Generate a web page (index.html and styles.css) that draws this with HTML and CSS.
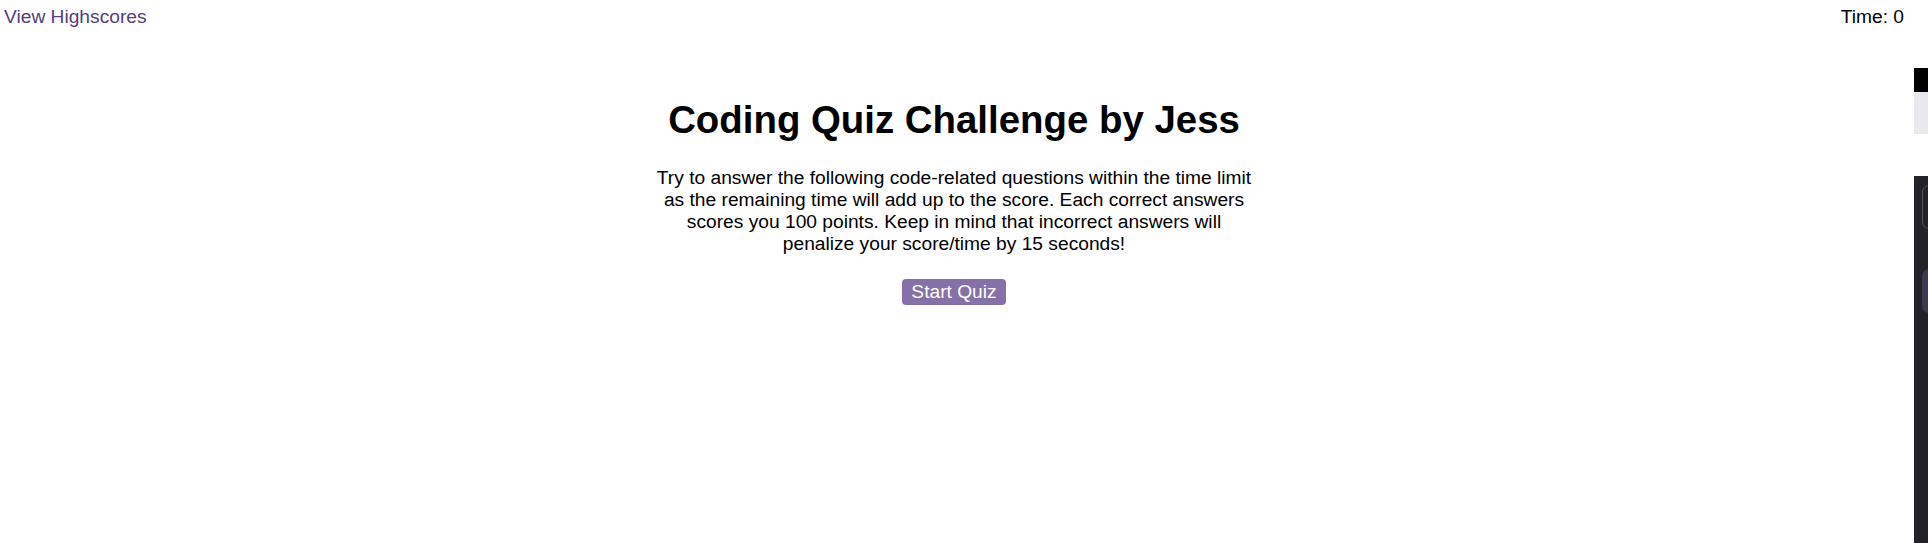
FILE: index.html
```html
<!DOCTYPE html>
<html lang="en">
<head>
<meta charset="utf-8">
<title>Coding Quiz Challenge</title>
<link rel="stylesheet" href="styles.css">
</head>
<body>
<div class="page">
  <header class="topbar">
    <a class="highscores" href="#">View Highscores</a>
    <span class="timer">Time: 0</span>
  </header>
  <section class="intro">
    <h1 class="title">Coding Quiz Challenge by Jess</h1>
    <p class="desc">Try to answer the following code-related questions within the time limit as the remaining time will add up to the score. Each correct answers scores you 100 points. Keep in mind that incorrect answers will penalize your score/time by 15 seconds!</p>
    <button class="start" type="button">Start Quiz</button>
  </section>
</div>
<aside class="side">
  <div class="side-black"></div>
  <div class="side-gray"></div>
  <div class="side-dark">
    <div class="side-outline"></div>
    <div class="side-fill"></div>
  </div>
</aside>
</body>
</html>
```

FILE: styles.css
```css
html, body {
  margin: 0;
  padding: 0;
  height: 100%;
  background: #ffffff;
}

body {
  display: flex;
  font-family: "Liberation Sans", Arial, sans-serif;
  font-size: 19.2px;
  color: #000000;
  overflow: hidden;
}

.page {
  flex: 0 0 1908px;
}

.topbar {
  display: flex;
  justify-content: space-between;
  padding: 6px 4px 0 4px;
  line-height: 22px;
}

.highscores {
  color: #563d7c;
  text-decoration: none;
}

.timer {
  color: #000000;
}

.intro {
  width: 600px;
  margin: 0 auto;
  padding-top: 44px;
  text-align: center;
}

.title {
  font-size: 38.4px;
  font-weight: bold;
  margin: 25.7px 0;
  line-height: 44px;
}

.desc {
  margin: 25.7px 0 24px;
  line-height: 22px;
}

.start {
  font-family: "Liberation Sans", Arial, sans-serif;
  font-size: 19.2px;
  color: #ffffff;
  background: #8670a8;
  border: none;
  border-radius: 4px;
  padding: 2px 9px;
  line-height: 22px;
  cursor: pointer;
}

.side {
  flex: 0 0 14px;
  margin-left: 6px;
  display: flex;
  flex-direction: column;
  overflow: hidden;
  padding-top: 68px;
}

.side-black {
  height: 24px;
  background: #000000;
}

.side-gray {
  height: 42px;
  background: #e8e9ed;
  margin-bottom: 42px;
}

.side-dark {
  flex: 1;
  background: #222326;
  padding: 9px 0 0 8px;
}

.side-outline {
  width: 30px;
  height: 42px;
  border: 1px solid #55565b;
  border-radius: 7px;
  margin-bottom: 40px;
}

.side-fill {
  width: 32px;
  height: 44px;
  background: #3a3a4c;
  border-radius: 7px;
}
```
